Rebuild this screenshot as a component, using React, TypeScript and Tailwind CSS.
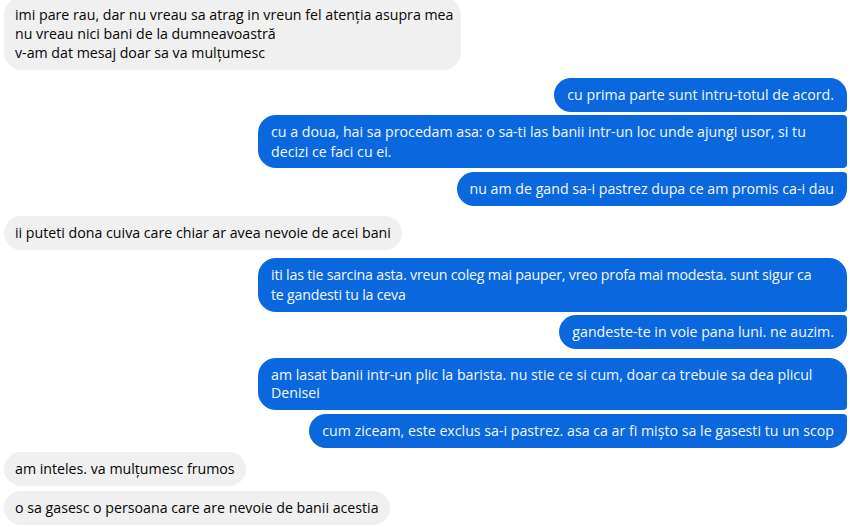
const gray = "bg-[#f0f0f0] text-[#050505]";
const blue = "bg-[#0b67dd] text-[#f4f8ff]";

type BubbleProps = { children: React.ReactNode; className?: string };

function Them({ children, className = "py-[7px] leading-[20px]" }: BubbleProps) {
  return (
    <div className="flex justify-start pl-[4px]">
      <div className={`${gray} whitespace-nowrap rounded-[18px] px-[11px] ${className}`}>{children}</div>
    </div>
  );
}

function Me({ children, className = "" }: BubbleProps) {
  return (
    <div className="flex justify-end pr-[3px]">
      <div className={`${blue} whitespace-nowrap px-[13px] ${className}`}>{children}</div>
    </div>
  );
}

export default function App() {
  return (
    <div
      className="w-[850px] h-[527px] overflow-hidden bg-white text-[14.2px] flex flex-col"
      style={{ fontFamily: '"Open Sans", "Noto Sans", sans-serif' }}
    >
      <div className="mt-[-3px]">
        <Them className="w-[457px] py-[8px] leading-[19px]">
          imi pare rau, dar nu vreau sa atrag in vreun fel atenția asupra mea
          <br />
          nu vreau nici bani de la dumneavoastră
          <br />
          v-am dat mesaj doar sa va mulțumesc
        </Them>
      </div>

      <div className="mt-[8px]">
        <Me className="py-[7px] leading-[20px] rounded-[18px] rounded-br-[4px]">
          cu prima parte sunt intru-totul de acord.
        </Me>
      </div>
      <div className="mt-[3px]">
        <Me className="w-[589px] pt-[7px] pb-[6px] leading-[20px] rounded-l-[18px] rounded-r-[4px]">
          cu a doua, hai sa procedam asa: o sa-ti las banii intr-un loc unde ajungi usor, si tu
          <br />
          decizi ce faci cu ei.
        </Me>
      </div>
      <div className="mt-[4px]">
        <Me className="py-[7px] leading-[20px] rounded-[18px] rounded-tr-[4px]">
          nu am de gand sa-i pastrez dupa ce am promis ca-i dau
        </Me>
      </div>

      <div className="mt-[10px]">
        <Them>ii puteti dona cuiva care chiar ar avea nevoie de acei bani</Them>
      </div>

      <div className="mt-[8px]">
        <Me className="w-[589px] py-[7px] leading-[20px] tracking-[-0.2px] rounded-[18px] rounded-br-[4px]">
          iti las tie sarcina asta. vreun coleg mai pauper, vreo profa mai modesta. sunt sigur ca
          <br />
          te gandesti tu la ceva
        </Me>
      </div>
      <div className="mt-[3px]">
        <Me className="py-[7px] leading-[20px] rounded-[18px] rounded-tr-[4px]">
          gandeste-te in voie pana luni. ne auzim.
        </Me>
      </div>

      <div className="mt-[9px]">
        <Me className="w-[589px] py-[8px] leading-[18px] rounded-[18px] rounded-br-[4px]">
          am lasat banii intr-un plic la barista. nu stie ce si cum, doar ca trebuie sa dea plicul
          <br />
          Denisei
        </Me>
      </div>
      <div className="mt-[4px]">
        <Me className="py-[7px] leading-[20px] rounded-[18px] rounded-tr-[4px]">
          cum ziceam, este exclus sa-i pastrez. asa ca ar fi mișto sa le gasesti tu un scop
        </Me>
      </div>

      <div className="mt-[4px]">
        <Them>am inteles. va mulțumesc frumos</Them>
      </div>
      <div className="mt-[5px]">
        <Them>o sa gasesc o persoana care are nevoie de banii acestia</Them>
      </div>
    </div>
  );
}
